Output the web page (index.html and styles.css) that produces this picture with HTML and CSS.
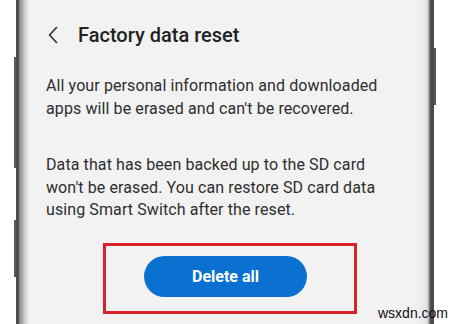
FILE: index.html
```html
<!DOCTYPE html>
<html>
<head>
<meta charset="utf-8">
<link rel="stylesheet" href="styles.css">
</head>
<body>
<div class="phone">
  <span class="key key-left-1"></span>
  <span class="key key-left-2"></span>
  <span class="key key-right"></span>
  <div class="screen">
    <div class="header">
      <svg class="back" width="12" height="18" viewBox="0 0 12 18"><polyline points="9.5,1.5 2.5,9 9.5,16.5" fill="none" stroke="#2a2a2a" stroke-width="1.6" stroke-linecap="round" stroke-linejoin="round"/></svg>
      <h1 class="title">Factory data reset</h1>
    </div>
    <p class="para">All your personal information and downloaded apps will be erased and can't be recovered.</p>
    <p class="para para-2">Data that has been backed up to the SD card won't be erased. You can restore SD card data using Smart Switch after the reset.</p>
    <div class="highlight">
      <button class="delete-btn">Delete all</button>
    </div>
  </div>
</div>
<div class="watermark">wsxdn.com</div>
</body>
</html>
```

FILE: styles.css
```css
html, body {
  margin: 0;
  padding: 0;
}
body {
  width: 451px;
  height: 324px;
  overflow: hidden;
  background: #ffffff;
  position: relative;
  font-family: Roboto, "Noto Sans", "Liberation Sans", sans-serif;
}
.phone {
  position: relative;
  margin-left: 16px;
  width: 418px;
  height: 324px;
  background: linear-gradient(to right,
    #4c4c52 0px, #4c4c52 3px,
    #85858b 3px, #a9a9ae 6px,
    #cfcfd2 9px, #e6e6e7 12px,
    #f2f2f2 14px, #f2f2f2 calc(100% - 18px),
    #e8e8e9 calc(100% - 9px), #d6d6d8 calc(100% - 6px),
    #8d8d93 calc(100% - 5px), #48484e calc(100% - 3px),
    #48484e 100%);
}
.key {
  position: absolute;
  width: 2px;
  background: #5a5a5e;
}
.key-left-1 { left: -2px; top: 57px; height: 111px; }
.key-left-2 { left: -2px; top: 220px; height: 57px; }
.key-right { right: -2px; top: 48px; height: 57px; }
.screen {
  padding: 21px 0 0 30px;
}
.header {
  display: flex;
  align-items: center;
  height: 28px;
}
.back {
  margin-left: 1px;
  margin-right: 19px;
}
.title {
  margin: 0;
  font-size: 20px;
  font-weight: 500;
  color: #222222;
  line-height: 28px;
}
.para {
  margin: 26px 0 0 0;
  width: 340px;
  font-size: 16px;
  line-height: 22.5px;
  letter-spacing: 0.1px;
  color: #2e2e2e;
}
.para-2 {
  margin-top: 34px;
}
.highlight {
  margin: 21px 0 0 57px;
  width: 248px;
  height: 65px;
  border: 3px solid #d8232a;
}
.delete-btn {
  display: block;
  margin: 10px 0 0 38px;
  width: 163px;
  height: 41px;
  border: none;
  border-radius: 21px;
  background: #0b71d0;
  color: #ffffff;
  font-family: Roboto, "Noto Sans", "Liberation Sans", sans-serif;
  font-size: 16px;
  font-weight: 700;
  padding: 0;
}
.watermark {
  position: absolute;
  left: 378px;
  top: 305px;
  font-family: "Liberation Sans", Arial, sans-serif;
  font-size: 14px;
  color: #111;
  line-height: 16px;
}
```
